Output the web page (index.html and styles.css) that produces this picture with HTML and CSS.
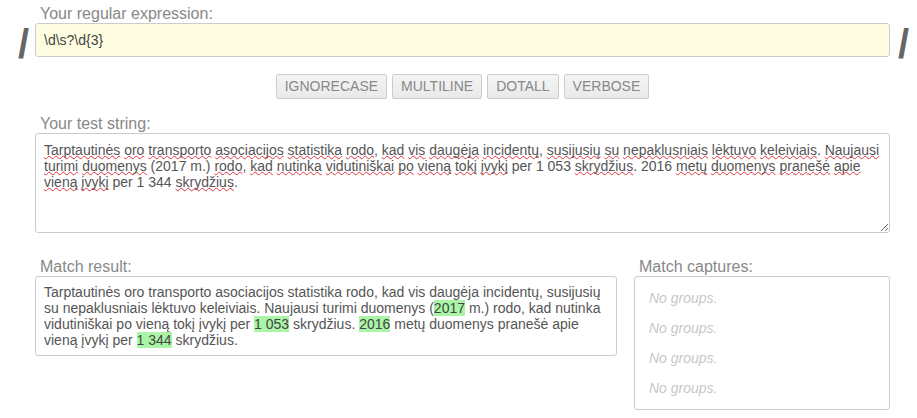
FILE: index.html
```html
<!DOCTYPE html>
<html lang="lt">
<head>
<meta charset="utf-8">
<title>Regex tester</title>
<link rel="stylesheet" href="styles.css">
</head>
<body>
<div class="page">
  <div class="regex-row">
    <div class="slash slash-left">/</div>
    <div class="field">
      <label class="label">Your regular expression:</label>
      <div class="regex-input">\d\s?\d{3}</div>
    </div>
    <div class="slash slash-right">/</div>
  </div>

  <div class="main">
    <div class="flags">
      <button class="flag">IGNORECASE</button>
      <button class="flag">MULTILINE</button>
      <button class="flag">DOTALL</button>
      <button class="flag">VERBOSE</button>
    </div>

    <div class="field test-field">
      <label class="label">Your test string:</label>
      <div class="test-area"><span class="sp">Tarptautinės</span> <span class="sp">oro</span> <span class="sp">transporto</span> <span class="sp">asociacijos</span> <span class="sp">statistika</span> <span class="sp">rodo</span>, <span class="sp">kad</span> <span class="sp">vis</span> <span class="sp">daugėja</span> <span class="sp">incidentų</span>, <span class="sp">susijusių</span> <span class="sp">su</span> <span class="sp">nepaklusniais</span> <span class="sp">lėktuvo</span> <span class="sp">keleiviais</span>. <span class="sp">Naujausi</span> <span class="sp">turimi</span> <span class="sp">duomenys</span> (2017 m.) <span class="sp">rodo</span>, <span class="sp">kad</span> <span class="sp">nutinka</span> <span class="sp">vidutiniškai</span> <span class="sp">po</span> <span class="sp">vieną</span> <span class="sp">tokį</span> <span class="sp">įvykį</span> per 1 053 <span class="sp">skrydžius</span>. 2016 <span class="sp">metų</span> <span class="sp">duomenys</span> <span class="sp">pranešė</span> <span class="sp">apie</span> <span class="sp">vieną</span> <span class="sp">įvykį</span> per 1 344 <span class="sp">skrydžius</span>.</div>
    </div>

    <div class="results">
      <div class="field">
        <label class="label">Match result:</label>
        <div class="result-box">Tarptautinės oro transporto asociacijos statistika rodo, kad vis daugėja incidentų, susijusių su nepaklusniais lėktuvo keleiviais. Naujausi turimi duomenys (<span class="hl">2017</span> m.) rodo, kad nutinka vidutiniškai po vieną tokį įvykį per <span class="hl">1 053</span> skrydžius. <span class="hl">2016</span> metų duomenys pranešė apie vieną įvykį per <span class="hl">1 344</span> skrydžius.</div>
      </div>
      <div class="field">
        <label class="label">Match captures:</label>
        <ul class="captures">
          <li class="capture">No groups.</li>
          <li class="capture">No groups.</li>
          <li class="capture">No groups.</li>
          <li class="capture">No groups.</li>
        </ul>
      </div>
    </div>
  </div>
</div>
</body>
</html>
```

FILE: styles.css
```css
* { box-sizing: border-box; }

html, body {
  margin: 0;
  padding: 0;
  background: #fff;
}

body {
  font-family: "Liberation Sans", Arial, sans-serif;
  font-size: 14px;
  color: #555;
}

.page {
  padding-top: 5px;
}

.regex-row {
  display: flex;
  margin-left: 16px;
  margin-right: 7px;
}

.slash {
  width: 19px;
  font-size: 40px;
  font-weight: bold;
  line-height: 33px;
  color: #666;
  align-self: flex-end;
  margin-bottom: -4px;
}

.slash-left {
  text-align: right;
  padding-right: 6px;
}

.slash-right {
  width: 20px;
  padding-left: 8px;
}

.field {
  display: flex;
  flex-direction: column;
  flex: 1;
  min-width: 0;
}

.label {
  display: block;
  font-size: 16px;
  line-height: 18px;
  color: #888;
  padding-left: 5px;
}

.regex-input {
  height: 34px;
  background: #fffde1;
  border: 1px solid #ccc;
  border-radius: 3px;
  padding: 0 8px;
  line-height: 32px;
  font-size: 14px;
  color: #444;
}

.main {
  margin-left: 35px;
  margin-right: 27px;
}

.flags {
  display: flex;
  justify-content: center;
  gap: 5px;
  margin-top: 17px;
}

.flag {
  font-family: "Liberation Sans", Arial, sans-serif;
  font-size: 14px;
  color: #888;
  height: 25px;
  padding: 0 8px;
  background: linear-gradient(#f5f5f5, #e9e9e9);
  border: 1px solid #ccc;
  border-radius: 2px;
  line-height: 23px;
}

.test-field {
  margin-top: 16px;
}

.test-area {
  height: 100px;
  border: 1px solid #ccc;
  border-radius: 3px;
  padding: 8px;
  color: #555;
  line-height: 16px;
  overflow: auto;
  resize: vertical;
}

.sp {
  text-decoration: underline wavy #e0343c;
  text-decoration-thickness: 1px;
  text-underline-offset: 0;
  text-decoration-skip-ink: none;
}

.results {
  display: grid;
  grid-template-columns: 1fr 256px;
  column-gap: 17px;
  margin-top: 25px;
  align-items: start;
}

.result-box {
  border: 1px solid #ccc;
  border-radius: 3px;
  padding: 7px 8px 7px;
  line-height: 16px;
  color: #555;
}

.hl {
  background: #aaf5a6;
  color: #444;
}

.captures {
  list-style: none;
  margin: 0;
  padding: 6px 14px;
  border: 1px solid #ccc;
  border-radius: 3px;
}

.capture {
  line-height: 30px;
  font-size: 14px;
  font-style: italic;
  color: #c8c8c8;
}
```
